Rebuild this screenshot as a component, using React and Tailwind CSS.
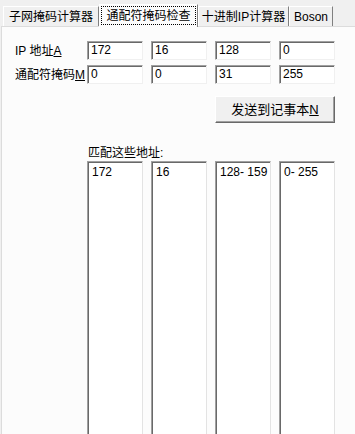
import React from "react";

const font = { fontFamily: '"Liberation Sans", "Noto Sans CJK SC", sans-serif' };

const Field = ({ value }) => (
  <div className="w-[56px] h-[19px] bg-white border-t border-l border-[#a0a0a0] border-r border-b border-r-[#f0f0f0] border-b-[#f0f0f0] shadow-[inset_1px_1px_0_#696969] pl-[3px] text-[12px] leading-[17px] text-black whitespace-nowrap">
    {value}
  </div>
);

const ListBox = ({ value }) => (
  <div className="w-[56px] h-[290px] bg-white border-t border-l border-[#a0a0a0] border-r border-b border-r-[#e3e3e3] border-b-[#e3e3e3] shadow-[inset_1px_1px_0_#696969] pl-[4px] pt-[2px] text-[12px] leading-[17px] text-black whitespace-nowrap">
    {value}
  </div>
);

const Tab = ({ label, active, width }) =>
  active ? (
    <div
      className={`${width} h-[23px] -mb-px relative z-10 bg-[#fcfcfc] border-t border-l border-white border-r border-r-[#808080] p-[1px] pb-[2px] flex whitespace-nowrap`}
    >
      <div className="flex-1 border border-dotted border-black flex items-center justify-center text-[12px]">
        {label}
      </div>
    </div>
  ) : (
    <div
      className={`${width} h-[20px] mt-[2px] bg-[#f0f0f0] border-t border-l border-white border-r border-r-[#808080] flex items-center justify-center text-[12px] whitespace-nowrap`}
    >
      {label}
    </div>
  );

export default function App() {
  return (
    <div className="w-[355px] h-[434px] bg-[#f0f0f0] overflow-hidden flex flex-col text-black" style={font}>
      <div className="flex items-end pt-[4px] pl-[3px]">
        <Tab label="子网掩码计算器" width="w-[96px]" />
        <Tab label="通配符掩码检查" width="w-[99px]" active />
        <Tab label="十进制IP计算器" width="w-[91px]" />
        <Tab label="Boson" width="w-[44px]" />
      </div>
      <div className="flex-1 ml-[1px] bg-[#fcfcfc] border-l border-t border-[#dcdcdc] pl-[13px] pt-[14px]">
        <div className="flex items-center h-[19px]">
          <div className="w-[72px] text-[12px] whitespace-nowrap">
            IP 地址<span className="underline">A</span>
          </div>
          <div className="flex gap-[8px]">
            <Field value="172" />
            <Field value="16" />
            <Field value="128" />
            <Field value="0" />
          </div>
        </div>
        <div className="flex items-center h-[19px] mt-[5px]">
          <div className="w-[72px] text-[12px] whitespace-nowrap">
            通配符掩码<span className="underline">M</span>
          </div>
          <div className="flex gap-[8px]">
            <Field value="0" />
            <Field value="0" />
            <Field value="31" />
            <Field value="255" />
          </div>
        </div>
        <div className="ml-[200px] mt-[12px] w-[120px] h-[27px] bg-[#f0f0f0] border border-t-white border-l-white border-r-[#696969] border-b-[#696969] shadow-[inset_-1px_-1px_0_#a0a0a0] flex items-center justify-center text-[13px] whitespace-nowrap">
          发送到记事本<span className="underline">N</span>
        </div>
        <div className="ml-[73px] mt-[22px] text-[12px] leading-[16px] whitespace-nowrap">匹配这些地址:</div>
        <div className="ml-[72px] flex gap-[8px]">
          <ListBox value="172" />
          <ListBox value="16" />
          <ListBox value="128- 159" />
          <ListBox value="0- 255" />
        </div>
      </div>
    </div>
  );
}
